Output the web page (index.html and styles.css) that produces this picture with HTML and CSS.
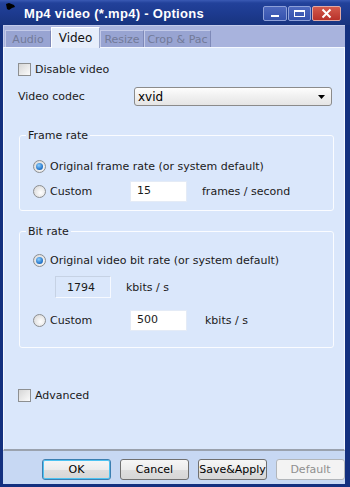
FILE: index.html
```html
<!DOCTYPE html>
<html lang="en">
<head>
    <meta charset="UTF-8">
    <title>Mp4 video (*.mp4) - Options</title>
    <link rel="stylesheet" href="styles.css">
</head>
<body>
<div class="window">
    <!-- caption -->
    <div class="titlebar">
        <svg class="app-icon" width="10" height="8" viewBox="0 0 10 8">
            <path d="M0 1 L3 0 L8 2 L9 4 L6 5 L3 7 L1 6 Z" fill="#000"/>
        </svg>
        <span class="title">Mp4 video (*.mp4) - Options</span>
        <div class="caption-btns">
            <span class="cap-btn">
                <svg width="22" height="13" viewBox="0 0 22 13"><rect x="7" y="8" width="8" height="2" fill="#fff"/></svg>
            </span>
            <span class="cap-btn">
                <svg width="21" height="13" viewBox="0 0 21 13"><rect x="5.5" y="3.5" width="10" height="6" fill="none" stroke="#fff"/><rect x="5" y="3" width="11" height="2" fill="#fff"/></svg>
            </span>
            <span class="cap-btn close">
                <svg width="27" height="13" viewBox="0 0 27 13"><path d="M9.5 2.5 L17.5 10.5 M17.5 2.5 L9.5 10.5" stroke="#fff" stroke-width="2"/></svg>
            </span>
        </div>
    </div>

    <div class="frame">
        <div class="tabs">
            <span class="tab tab-audio">Audio</span>
            <span class="tab active">Video</span>
            <span class="tab tab-resize">Resize</span>
            <span class="tab tab-crop">Crop &amp; Pac</span>
        </div>

        <div class="panel">
            <label class="check-row">
                <span class="checkbox"></span>Disable video
            </label>

            <div class="codec-row">
                <span class="codec-label">Video codec</span>
                <div class="select">
                    <span>xvid</span>
                    <svg width="7" height="4" viewBox="0 0 7 4"><path d="M0 0 H7 L3.5 4 Z" fill="#000"/></svg>
                </div>
            </div>

            <fieldset class="group group-frame">
                <legend>Frame rate</legend>
                <div class="opt-row">
                    <span class="radio checked"></span>Original frame rate (or system default)
                </div>
                <div class="opt-row row-custom">
                    <span class="radio"></span><span class="opt-name">Custom</span>
                    <span class="field">15</span>
                    <span class="unit unit-fps">frames / second</span>
                </div>
            </fieldset>

            <fieldset class="group group-bit">
                <legend>Bit rate</legend>
                <div class="opt-row">
                    <span class="radio checked"></span>Original video bit rate (or system default)
                </div>
                <div class="opt-row row-orig">
                    <span class="field readonly">1794</span>
                    <span class="unit unit-orig">kbits / s</span>
                </div>
                <div class="opt-row row-custom row-bit">
                    <span class="radio"></span><span class="opt-name">Custom</span>
                    <span class="field">500</span>
                    <span class="unit unit-kbit">kbits / s</span>
                </div>
            </fieldset>

            <label class="check-row advanced">
                <span class="checkbox"></span>Advanced
            </label>
        </div>

        <div class="footer">
            <button class="btn focused">OK</button>
            <button class="btn">Cancel</button>
            <button class="btn">Save&amp;Apply</button>
            <button class="btn" disabled>Default</button>
        </div>
    </div>
</div>
</body>
</html>
```

FILE: styles.css
```css
html, body {
    margin: 0;
    padding: 0;
}

body {
    width: 350px;
    height: 487px;
    overflow: hidden;
    font-family: "DejaVu Sans", Verdana, sans-serif;
    font-size: 11px;
    color: #1a1a1a;
}

.window {
    width: 350px;
    height: 487px;
    background: #13307f;
    display: flex;
    flex-direction: column;
}

/* caption */
.titlebar {
    height: 25px;
    display: flex;
    align-items: center;
    background: linear-gradient(#3a5ab4 0, #22419a 3px, #1d3b90 50%, #18347f 100%);
    padding: 0 9px 0 6px;
}

.app-icon {
    margin-top: -12px;
}

.title {
    margin-left: 8px;
    color: #fff;
    font-family: "Liberation Sans", Arial, sans-serif;
    font-weight: bold;
    font-size: 13px;
    letter-spacing: 0.3px;
    flex: 1;
    padding-top: 2px;
}

.caption-btns {
    display: flex;
    gap: 1px;
    margin-top: 2px;
}

.cap-btn {
    display: flex;
    height: 13px;
    border: 1px solid #8ea0d8;
    border-radius: 2px;
    background: linear-gradient(#4d68be, #3552ad);
}

.cap-btn.close {
    border-color: #e0a9a4;
    background: linear-gradient(#d45a4c, #b8322a);
}

/* window body */
.frame {
    flex: 1;
    margin: 0 5px 3px 3px;
    background: #c6d7f3;
    display: flex;
    flex-direction: column;
}

.tabs {
    height: 22px;
    background: #a8b3dd;
    border-top: 1px solid #c3cbeb;
    display: flex;
    align-items: flex-end;
    padding-left: 1px;
    box-sizing: border-box;
    border-left: 1px solid #c3cbeb;
}

.tab {
    height: 17px;
    box-sizing: border-box;
    padding: 2px 0 0;
    text-align: center;
    color: #727a98;
    font-size: 11px;
    background: #98a4d2;
    border: 1px solid #c4cbe9;
    border-bottom: none;
    border-right-color: #7e89b8;
    white-space: nowrap;
}

.tab-audio { width: 46px; }
.tab-resize { width: 44px; }
.tab-crop { width: 67px; }

.tab.active {
    width: 49px;
    height: 21px;
    margin-bottom: -1px;
    color: #111;
    font-size: 12px;
    background: #e6eefb;
    border-color: #fff;
    border-right-color: #9aa6c8;
    position: relative;
    z-index: 1;
    padding-top: 3px;
}

.panel {
    height: 404px;
    box-sizing: border-box;
    background: #dae7fb;
    border-left: 1px solid #f4f8ff;
    border-top: 1px solid #f4f8ff;
    border-right: 1px solid #f4f8ff;
    border-bottom: 2px solid #9aa2ae;
    padding: 14px 10px 0 14px;
}

.check-row {
    display: flex;
    align-items: center;
    height: 14px;
    gap: 4px;
}

.checkbox {
    width: 11px;
    height: 11px;
    border: 1px solid #8d8f91;
    background: linear-gradient(135deg, #d6d6d6, #fbfbfb);
}

.codec-row {
    display: flex;
    align-items: center;
    margin-top: 11px;
}

.codec-label {
    width: 116px;
}

.select {
    width: 198px;
    height: 19px;
    border: 1px solid #8b8b8b;
    border-radius: 3px;
    background: linear-gradient(#fdfdfd, #f0f0f0 50%, #e5e5e5);
    display: flex;
    align-items: center;
    justify-content: space-between;
    padding: 0 6px 0 3px;
    box-sizing: border-box;
    font-size: 12px;
    color: #000;
}

.group {
    margin: 0 0 0 1px;
    width: 315px;
    box-sizing: border-box;
    border: 1px solid #fafcff;
    border-radius: 3px;
    padding: 14px 0 0 13px;
}

.group legend {
    padding: 0 2px;
    margin-left: -7px;
    line-height: 13px;
}

.group-frame {
    margin-top: 23px;
    height: 82px;
}

.group-bit {
    margin-top: 14px;
    height: 123px;
    padding-top: 12px;
}

.opt-row {
    display: flex;
    align-items: center;
    height: 21px;
}

.radio {
    width: 11px;
    height: 11px;
    border: 1px solid #8c8e90;
    border-radius: 50%;
    background: radial-gradient(circle at 60% 60%, #ffffff, #d2d2d2);
    margin-right: 4px;
    box-sizing: content-box;
    display: flex;
    align-items: center;
    justify-content: center;
}

.radio.checked::after {
    content: "";
    width: 7px;
    height: 7px;
    border-radius: 50%;
    background: radial-gradient(circle at 40% 35%, #8fd0ff, #1c6ec5 70%, #144f9a);
}

.row-custom {
    margin-top: 4px;
}

.opt-name {
    width: 80px;
}

.field {
    width: 57px;
    height: 21px;
    box-sizing: border-box;
    background: #fff;
    border: 1px solid #e4ebf6;
    padding: 2px 0 0 6px;
    font-size: 11px;
    display: block;
}

.field.readonly {
    background: #dae7fb;
    border: 1px solid #c6d2e4;
    border-right-color: #f6f9ff;
    border-bottom-color: #f6f9ff;
    margin-left: 22px;
    height: 22px;
    width: 56px;
    padding-left: 11px;
    padding-top: 4px;
}

.unit-fps { margin-left: 15px; }
.unit-orig { margin-left: 15px; }
.unit-kbit { margin-left: 18px; }

.row-orig {
    height: 22px;
    margin-top: 5px;
}

.row-bit {
    margin-top: 12px;
}

.advanced {
    margin-top: 40px;
}

/* buttons */
.footer {
    flex: 1;
    display: flex;
    justify-content: flex-end;
    align-items: flex-start;
    gap: 9px;
    padding: 8px 0 0;
    background: #c7d8f3;
}

.btn {
    width: 69px;
    height: 21px;
    margin: 0;
    padding: 0;
    font-family: "DejaVu Sans", Verdana, sans-serif;
    font-size: 11px;
    color: #000;
    border: 1px solid #707070;
    border-radius: 3px;
    background: linear-gradient(#f6f6f6, #ececec 50%, #dedede 51%, #d6d6d6);
}

.btn.focused {
    border-color: #3c7fb1;
    box-shadow: inset 0 0 0 1px #4ec3f2;
}

.btn:disabled {
    color: #8f8f8f;
    border-color: #b2b6ba;
    background: #f3f3f3;
}
```
